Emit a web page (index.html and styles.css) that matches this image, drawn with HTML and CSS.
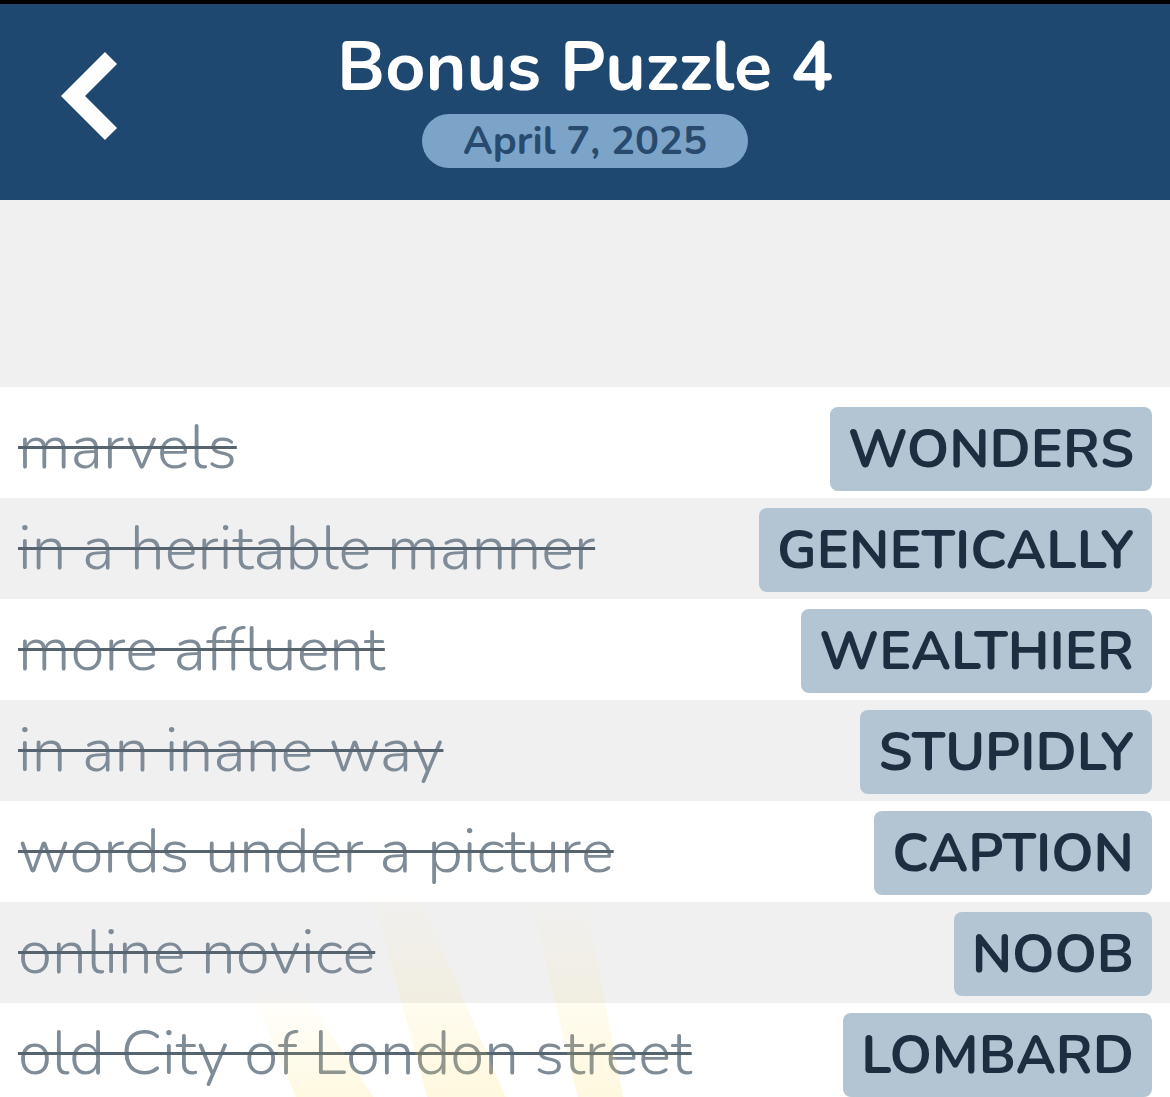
FILE: index.html
```html
<!DOCTYPE html>
<html lang="en">
<head>
    <meta charset="UTF-8">
    <meta name="viewport" content="width=device-width, initial-scale=1.0">
    <title>Bonus Puzzle 4</title>
    <link rel="stylesheet" href="styles.css">
</head>
<body>

    <div class="topbar"></div>

    <div class="header">
        <a href="#" class="back">
            <svg width="70" height="100" viewBox="0 0 70 100">
                <polyline points="50,10 12,48 50,86" fill="none" stroke="#ffffff" stroke-width="17" stroke-linecap="butt" stroke-linejoin="miter"/>
            </svg>
        </a>
        <h1>Bonus Puzzle 4</h1>
        <span class="date">April 7, 2025</span>
    </div>

    <div class="spacer"></div>

    <div class="list">
        <svg class="glow" width="700" height="240" viewBox="0 0 700 240">
            <defs>
                <linearGradient id="beam" x1="0" y1="0" x2="0" y2="1">
                    <stop offset="0" stop-color="#ffd84a" stop-opacity="0"/>
                    <stop offset="1" stop-color="#ffd84a" stop-opacity="0.18"/>
                </linearGradient>
            </defs>
            <polygon points="250,120 300,120 380,240 300,240" fill="url(#beam)"/>
            <polygon points="370,20 415,20 510,240 430,240" fill="url(#beam)"/>
            <polygon points="530,30 585,30 625,240 580,240" fill="url(#beam)"/>
        </svg>
        <ul id="clues"></ul>
    </div>

    <script>
        const clues = [
            ["marvels", "WONDERS"],
            ["in a heritable manner", "GENETICALLY"],
            ["more affluent", "WEALTHIER"],
            ["in an inane way", "STUPIDLY"],
            ["words under a picture", "CAPTION"],
            ["online novice", "NOOB"],
            ["old City of London street", "LOMBARD"]
        ];

        const list = document.getElementById("clues");
        clues.forEach(clue => {
            const li = document.createElement("li");
            li.innerHTML = `<span class="clue">${clue[0]}</span><span class="answer">${clue[1]}</span>`;
            list.appendChild(li);
        });
    </script>

</body>
</html>
```

FILE: styles.css
```css
body {
    font-family: "Nunito", Lato, "Open Sans", sans-serif;
    margin: 0;
    padding: 0;
    background-color: #ffffff;
    overflow: hidden;
}

.topbar {
    height: 4px;
    background: #000000;
}

.header {
    background-color: #1f4871;
    height: 196px;
    display: flex;
    flex-direction: column;
    align-items: center;
    position: relative;
}

.header h1 {
    color: #ffffff;
    font-size: 70px;
    font-weight: bold;
    margin: 22px 0 0 0;
    line-height: 82px;
}

.back {
    position: absolute;
    left: 61px;
    top: 44px;
}

.date {
    margin-top: 6px;
    background: #7ba4c8;
    color: #284a6e;
    font-size: 40px;
    font-weight: bold;
    width: 326px;
    height: 54px;
    line-height: 54px;
    text-align: center;
    border-radius: 27px;
}

.spacer {
    height: 187px;
    background: #f0f0f0;
}

.list {
    position: relative;
    padding-top: 10px;
    background: #ffffff;
}

.glow {
    position: absolute;
    left: 0;
    top: 480px;
    pointer-events: none;
    z-index: 2;
}

ul {
    list-style: none;
    padding: 0;
    margin: 0;
}

li {
    display: flex;
    align-items: center;
    justify-content: space-between;
    height: 101px;
    padding: 0 18px;
    box-sizing: border-box;
}

li:nth-child(even) {
    background: #f0f0f0;
}

.clue {
    color: #7f8c98;
    font-size: 62px;
    font-weight: 300;
    text-decoration: line-through;
    text-decoration-color: #56646f;
    text-decoration-thickness: 3px;
}

.answer {
    background: #b3c5d3;
    color: #1c2e40;
    font-size: 54px;
    font-weight: bold;
    height: 84px;
    line-height: 84px;
    padding: 0 18px;
    border-radius: 8px;
    margin-top: 2px;
}
```
